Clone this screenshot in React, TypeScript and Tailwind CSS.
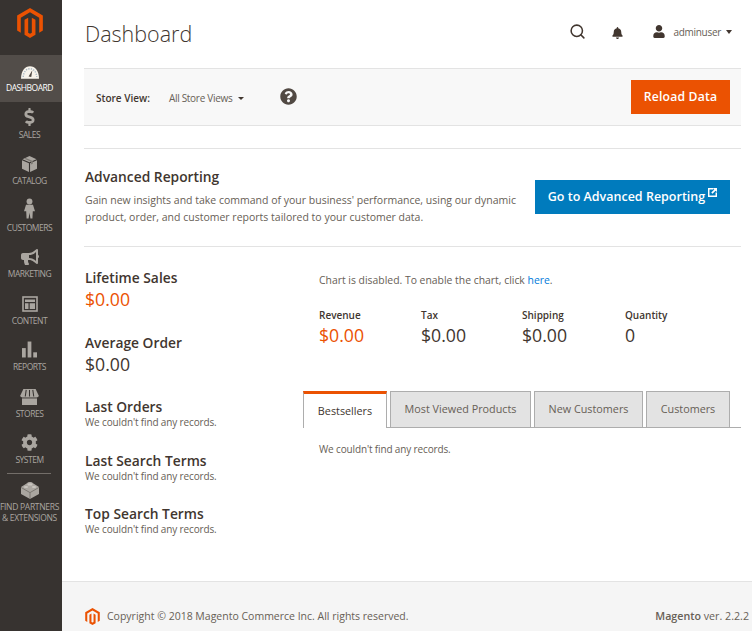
import React from 'react';
import { Search } from 'lucide-react';
import { FaBell, FaBullhorn, FaCog, FaDollarSign, FaQuestionCircle, FaUser } from 'react-icons/fa';

// ─── Icons ─────────────────────────────────────────────────────────────────────

const Logo: React.FC<{ className: string }> = ({ className }) => (
  <svg viewBox="0 0 24 28" className={className} fill="currentColor">
    <path d="M12 0 0 7v14l3.4 2V9L12 4l8.6 5v14l3.4-2V7z" />
    <path d="M13.7 23 12 24l-1.7-1V9L6.9 11v14l5.1 3 5.1-3V11l-3.4-2z" />
  </svg>
);

const Gauge = () => (
  <svg viewBox="0 0 20 14" className="w-[18px] h-[13px]">
    <path d="M0 14C0 5 4.5 0 10 0s10 5 10 14z" fill="#f7f3eb" />
    <path d="M2.5 12C2.8 6.5 5.8 2.8 10 2.8s7.2 3.7 7.5 9.2" fill="none" stroke="#a9b8c4" strokeWidth="1.6" strokeDasharray="1.4 1.4" />
    <path d="M8.4 11.5 12.6 4.5 11.4 12z" fill="#514943" />
  </svg>
);

const Box = () => (
  <svg viewBox="0 0 16 17" className="w-[15px] h-[16px]" fill="#aaa6a0">
    <path d="M8 0 .5 3.4 8 6.6l7.5-3.2z" />
    <path d="M0 4.6 7.4 7.8V17L0 13.5z" />
    <path d="M16 4.6 8.6 7.8V17l7.4-3.5z" />
    <path d="M4 2 11.5 5.2v3l-2 .8V6.2L2.6 3z" fill="#7d7973" />
  </svg>
);

const Person = () => (
  <svg viewBox="0 0 12 22" className="w-[11px] h-[21px]" fill="#aaa6a0">
    <circle cx="6" cy="3.4" r="3.2" />
    <path d="M2.2 7h7.6L12 14H9.6l-.4 8H7l-1-6.5L5 22H2.8l-.4-8H0z" />
  </svg>
);

const ContentIcon = () => (
  <svg viewBox="0 0 16 16" className="w-[16px] h-[16px]" fill="none" stroke="#aaa6a0">
    <rect x="1" y="1" width="14" height="14" strokeWidth="1.6" />
    <path d="M3 3.5h10v2.5H3z" fill="#aaa6a0" stroke="none" />
    <path d="M3 7.2h3.5V13H3zM7.7 7.2H13V13H7.7z" fill="#aaa6a0" stroke="none" />
  </svg>
);

const Bars = () => (
  <svg viewBox="0 0 16 17" className="w-[15px] h-[17px]" fill="#aaa6a0">
    <rect x="0" y="7" width="4" height="10" />
    <rect x="6" y="0" width="4" height="17" />
    <rect x="12" y="11.5" width="4" height="5.5" />
  </svg>
);

const Shop = () => (
  <svg viewBox="0 0 20 17" className="w-[19px] h-[16px]" fill="#aaa6a0">
    <path d="M3.5 0h13L20 7.5c-.6 1-1.5 1.5-2.4 1.5H2.4C1.5 9 .6 8.5 0 7.5z" />
    <path d="M6.5 1 5.5 8M10 1v7M13.5 1l1 7" stroke="#373330" strokeWidth="1.1" />
    <path d="M2 10h16v7H2z" />
  </svg>
);

const Brick = () => (
  <svg viewBox="0 0 18 17" className="w-[18px] h-[17px]" fill="#aaa6a0">
    <path d="M9 0c1.6 0 3 .6 3.4 1.6L18 5v7l-9 5-9-5V5l5.6-3.4C6 .6 7.4 0 9 0z" />
    <path d="M0 5.4 9 10.6 18 5.4M9 10.6V17" fill="none" stroke="#6f6b65" strokeWidth=".8" />
    <ellipse cx="9" cy="2.4" rx="2.6" ry="1.2" fill="#c9c5bf" />
    <ellipse cx="5" cy="5" rx="2.2" ry="1" fill="#c9c5bf" />
    <ellipse cx="13" cy="5" rx="2.2" ry="1" fill="#c9c5bf" />
  </svg>
);

const ExternalLink = () => (
  <svg viewBox="0 0 10 10" className="w-[9px] h-[9px] mb-[9px] ml-[3px]" fill="#ffffff">
    <path d="M0 0h6v1.6H1.6v6.8h6.8V5H10v5H0z" />
    <path d="M5.5 0H10v4.5L8.4 3 5 6.4 3.6 5 7 1.6z" />
  </svg>
);

// ─── Sidebar ───────────────────────────────────────────────────────────────────

const navItems = [
  { label: 'DASHBOARD', icon: <Gauge />, active: true },
  { label: 'SALES', icon: <FaDollarSign className="w-[17px] h-[18px] text-[#aaa6a0]" /> },
  { label: 'CATALOG', icon: <Box /> },
  { label: 'CUSTOMERS', icon: <Person /> },
  { label: 'MARKETING', icon: <FaBullhorn className="w-[18px] h-[16px] text-[#aaa6a0]" /> },
  { label: 'CONTENT', icon: <ContentIcon /> },
  { label: 'REPORTS', icon: <Bars /> },
  { label: 'STORES', icon: <Shop /> },
  { label: 'SYSTEM', icon: <FaCog className="w-[17px] h-[17px] text-[#aaa6a0]" /> },
];

const Sidebar = () => (
  <aside className="w-[62px] shrink-0 bg-[#373330] flex flex-col items-stretch">
    <div className="h-[55px] flex justify-center pt-[8px] pr-[3px]">
      <Logo className="w-[26px] h-[30px] text-[#eb5202]" />
    </div>
    {navItems.map((item) => (
      <div
        key={item.label}
        className={`h-[46.5px] flex flex-col items-center justify-end pb-[7.5px] pr-[3px] ${item.active ? 'bg-[#524d49] text-white' : 'text-[#aaa6a0]'}`}
      >
        <div className="h-[21px] flex items-end justify-center">{item.icon}</div>
        <div className="text-[8.5px] leading-[13px] mt-[2px] tracking-[-0.5px]">{item.label}</div>
      </div>
    ))}
    <div className="ml-[7px] mr-[11px] -mt-px border-t border-[#736e69]" />
    <div className="flex flex-col items-center text-[#aaa6a0] mt-[8px] pr-[3px]">
      <Brick />
      <div className="text-[8.5px] leading-[11px] mt-[2px] text-center whitespace-nowrap tracking-[-0.3px]">
        FIND PARTNERS
        <br />
        &amp; EXTENSIONS
      </div>
    </div>
  </aside>
);

// ─── Dashboard parts ───────────────────────────────────────────────────────────

const EmptySection: React.FC<{ title: string; className: string }> = ({ title, className }) => (
  <div className={className}>
    <h3 className="text-[13.8px] leading-[17px] font-semibold text-[#41362f]">{title}</h3>
    <p className="mt-px text-[10px] leading-[13px] tracking-[-0.14px] text-[#676056]">We couldn't find any records.</p>
  </div>
);

const totals = [
  { label: 'Revenue', value: '$0.00', accent: true },
  { label: 'Tax', value: '$0.00' },
  { label: 'Shipping', value: '$0.00' },
  { label: 'Quantity', value: '0' },
];

const tabs = [
  { label: 'Most Viewed Products', width: 'w-[141px]' },
  { label: 'New Customers', width: 'w-[109px]' },
  { label: 'Customers', width: 'w-[84px]' },
];

export default function App() {
  return (
    <div className="w-[752px] h-[631px] overflow-hidden flex bg-white font-['Open_Sans',sans-serif] text-[#41362f]">
      <Sidebar />
      <main className="flex-1 min-w-0 flex flex-col">
        <div className="flex-1 pl-[22px] pr-[11px]">
          {/* Page header */}
          <header className="h-[68px] flex items-start justify-between pr-[9px]">
            <h1 className="pl-px pt-[17px] text-[21.5px] leading-[34px] font-light text-[#41362f]">Dashboard</h1>
            <div className="flex items-center pt-[23px]">
              <Search className="w-[17px] h-[17px] text-[#41362f]" strokeWidth={2.2} />
              <FaBell className="w-[11px] h-[12px] ml-[26px] mt-[2px] text-[#41362f]" />
              <FaUser className="w-[14px] h-[13px] ml-[29px] text-[#41362f]" />
              <span className="ml-[8px] text-[10px] leading-[14px] tracking-[-0.3px] text-[#676056]">adminuser</span>
              <span className="ml-[5px] w-0 h-0 border-x-[3px] border-x-transparent border-t-[4px] border-t-[#41362f]" />
            </div>
          </header>

          {/* Store switcher */}
          <div className="h-[58px] flex items-center justify-between bg-[#f8f8f8] border-y border-[#e3e3e3] pl-[12px] pr-[11px]">
            <div className="flex items-center">
              <span className="mt-[3px] text-[10px] font-semibold text-[#41362f]">Store View:</span>
              <span className="mt-[3px] ml-[19px] text-[10px] tracking-[-0.3px] text-[#676056]">All Store Views</span>
              <span className="mt-[3px] ml-[6px] w-0 h-0 border-x-[3.5px] border-x-transparent border-t-[3px] border-t-[#41362f]" />
              <FaQuestionCircle className="ml-[36px] w-[17px] h-[17px] -mt-px text-[#514943]" />
            </div>
            <button className="w-[99px] h-[34px] bg-[#eb5202] text-white text-[12.2px] font-semibold tracking-[0.2px]">
              Reload Data
            </button>
          </div>

          {/* Advanced reporting */}
          <section className="mt-[22px] h-[99px] border-y border-[#e3e3e3] pl-px pr-[11px] flex items-start justify-between">
            <div className="pt-[18px]">
              <h2 className="text-[13.8px] leading-[20px] font-semibold text-[#41362f]">Advanced Reporting</h2>
              <p className="mt-[5px] text-[10.5px] leading-[17px] text-[#676056] whitespace-nowrap">
                Gain new insights and take command of your business' performance, using our dynamic
                <br />
                product, order, and customer reports tailored to your customer data.
              </p>
            </div>
            <button className="shrink-0 mt-[31px] w-[195px] h-[34px] bg-[#007bbd] text-white text-[12.5px] font-semibold flex items-center justify-center">
              Go to Advanced Reporting
              <ExternalLink />
            </button>
          </section>

          {/* Stats and tabs */}
          <div className="flex pl-px">
            <div className="w-[218px] shrink-0">
              <h3 className="mt-[22px] text-[13.8px] leading-[17px] font-semibold text-[#41362f]">Lifetime Sales</h3>
              <div className="mt-[2px] text-[17.7px] leading-[23px] text-[#eb5202]">$0.00</div>
              <h3 className="mt-[23px] text-[13.8px] leading-[17px] font-semibold text-[#41362f]">Average Order</h3>
              <div className="mt-[2px] text-[17.7px] leading-[23px] text-[#41362f]">$0.00</div>
              <EmptySection title="Last Orders" className="mt-[22px]" />
              <EmptySection title="Last Search Terms" className="mt-[23px]" />
              <EmptySection title="Top Search Terms" className="mt-[22px]" />
            </div>
            <div className="flex-1 min-w-0">
              <p className="pl-[16px] mt-[26px] text-[10.4px] leading-[14px] text-[#676056]">
                Chart is disabled. To enable the chart, click <span className="text-[#007bdb]">here</span>.
              </p>
              <div className="pl-[16px] mt-[21px] grid grid-cols-[102px_101px_103px_1fr]">
                {totals.map((t) => (
                  <div key={t.label}>
                    <div className="text-[10px] leading-[14px] font-semibold text-[#41362f]">{t.label}</div>
                    <div className={`mt-[2px] text-[17.7px] leading-[23px] ${t.accent ? 'text-[#eb5202]' : 'text-[#41362f]'}`}>
                      {t.value}
                    </div>
                  </div>
                ))}
              </div>
              <div className="mt-[44px] flex items-end border-b border-[#adadad] h-[37px]">
                <div className="w-[84px] h-[37px] -mb-px bg-white border-x border-[#adadad] border-t-[3px] border-t-[#eb5202] flex items-center justify-center text-[10.8px] text-[#41362f]">
                  Bestsellers
                </div>
                {tabs.map((t) => (
                  <div
                    key={t.label}
                    className={`${t.width} h-[36px] ml-[3px] bg-[#e3e3e3] border border-b-0 border-[#adadad] flex items-center justify-center text-[10.8px] text-[#676056]`}
                  >
                    {t.label}
                  </div>
                ))}
              </div>
              <p className="pl-[16px] mt-[14px] text-[10px] leading-[14px] tracking-[-0.14px] text-[#676056]">We couldn't find any records.</p>
            </div>
          </div>
        </div>

        {/* Footer */}
        <footer className="h-[50px] shrink-0 bg-[#f5f5f5] border-t border-[#e3e3e3] pl-[23px] pr-[3px] flex items-start justify-between">
          <div className="flex items-center pt-[26px]">
            <Logo className="w-[15px] h-[17px] text-[#eb5202]" />
            <span className="ml-[7px] text-[10.5px] leading-[17px] text-[#676056]">Copyright © 2018 Magento Commerce Inc. All rights reserved.</span>
          </div>
          <div className="pt-[26px] text-[10.7px] leading-[17px] text-[#676056] text-right">
            <b className="font-semibold">Magento</b> ver. 2.2.2
            <div className="text-[#eb5202] mt-[2px]">Report an Issue</div>
          </div>
        </footer>
      </main>
    </div>
  );
}
